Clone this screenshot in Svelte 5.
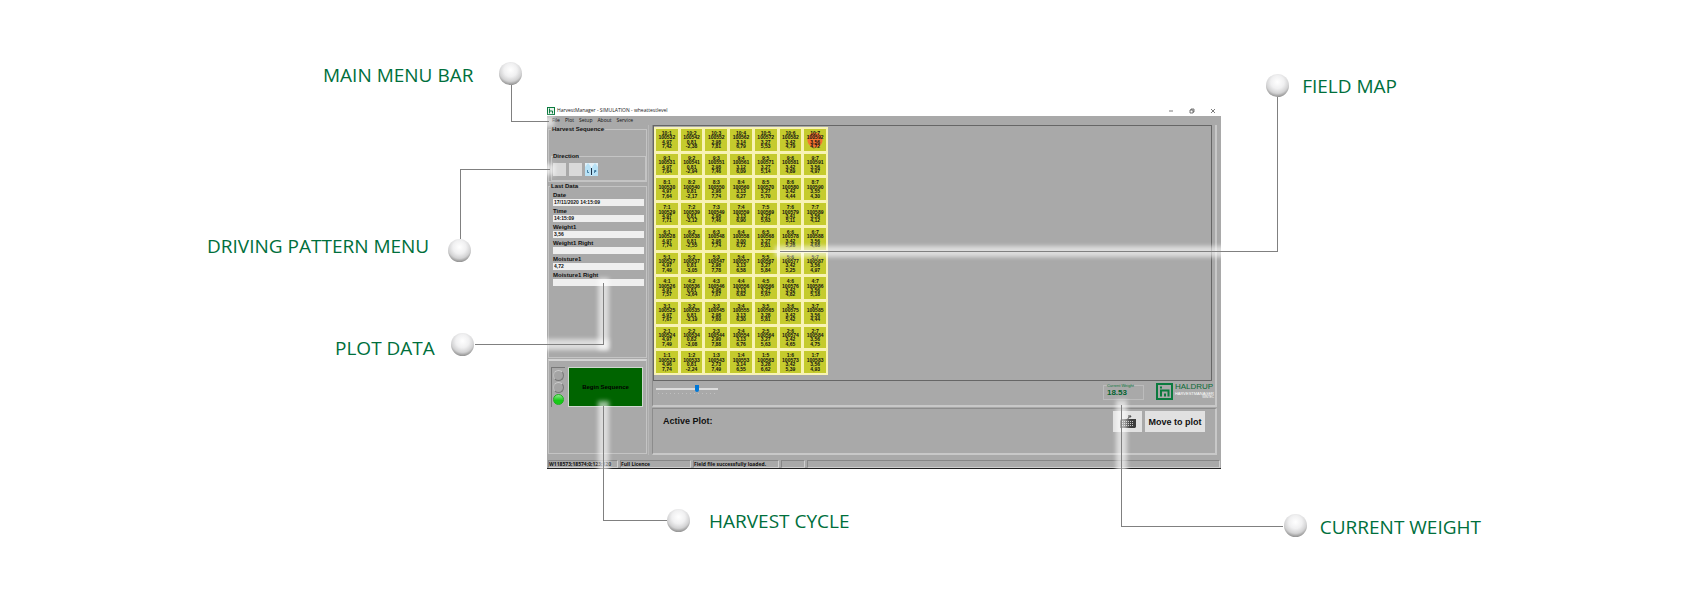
<script lang="ts">
  const menu = ['File', 'Plot', 'Setup', 'About', 'Service'];

  const lastData = [
    { id: 'date', label: 'Date', value: '17/11/2020 14:15:09' },
    { id: 'time', label: 'Time', value: '14:15:09' },
    { id: 'weight1', label: 'Weight1', value: '3,56' },
    { id: 'weight1-right', label: 'Weight1 Right', value: '' },
    { id: 'moisture1', label: 'Moisture1', value: '4,72' },
    { id: 'moisture1-right', label: 'Moisture1 Right', value: '' }
  ];

  // per field row: "weight moisture" for each column
  const readings: Record<number, string[]> = {
    10: ['4,97 7,42', '0,81 -2,38', '2,98 7,81', '3,14 6,79', '3,27 5,53', '3,42 4,79', '3,56 4,72'],
    9: ['4,97 7,64', '0,81 -2,94', '2,98 7,46', '3,12 6,09', '3,27 5,14', '3,42 4,89', '3,56 4,97'],
    8: ['4,97 7,64', '0,81 -2,17', '2,98 7,74', '3,13 6,27', '3,27 5,70', '3,42 4,44', '3,55 4,30'],
    7: ['4,97 7,71', '0,81 -3,12', '2,98 7,46', '3,13 6,90', '3,27 5,63', '3,41 5,11', '3,56 4,12'],
    6: ['4,97 7,74', '0,81 -2,55', '2,98 7,74', '3,00 6,72', '3,27 5,81', '3,42 5,28', '3,56 4,68'],
    5: ['4,97 7,49', '0,81 -3,05', '2,98 7,78', '3,13 6,58', '3,27 5,84', '3,42 5,25', '3,56 4,97'],
    4: ['4,97 7,57', '0,81 -3,64', '2,98 7,67', '3,13 6,62', '3,27 5,67', '3,42 4,82', '3,56 5,18'],
    3: ['4,97 7,67', '0,81 -3,19', '2,98 7,60', '3,13 6,30', '3,28 5,81', '3,42 5,42', '3,56 4,44'],
    2: ['4,97 7,49', '0,82 -3,08', '2,90 7,88', '3,13 6,76', '3,27 5,63', '3,42 4,65', '3,56 4,75'],
    1: ['4,96 7,74', '0,81 -2,24', '2,73 7,49', '3,14 6,55', '3,28 6,62', '3,42 5,39', '3,56 4,93']
  };

  const plots = Object.keys(readings)
    .map(Number)
    .sort((a, b) => b - a)
    .flatMap((row) =>
      readings[row].map((pair, i) => {
        const [weight, moisture] = pair.split(' ');
        return { pos: `${row}:${i + 1}`, id: 100512 + row + (i + 1) * 10, weight, moisture };
      })
    );

  const status = ['W118573;18574;0;123;120', 'Full Licence', 'Field file successfully loaded.', '', ''];

  const callouts = [
    { key: 'to-menu', text: 'MAIN MENU BAR' },
    { key: 'to-pattern', text: 'DRIVING PATTERN MENU' },
    { key: 'to-data', text: 'PLOT DATA' },
    { key: 'to-cycle', text: 'HARVEST CYCLE' },
    { key: 'to-map', text: 'FIELD MAP' },
    { key: 'to-weight', text: 'CURRENT WEIGHT' }
  ];

  let current = $state('10:7');
  let zoom = $state(67);
</script>

<main class="figure">
  <section class="window">
    <header class="titlebar">
      <svg class="app-icon" viewBox="0 0 16 16">
        <rect x="1" y="1" width="14" height="14" fill="#e8f3ec" stroke="#0b7a3e" stroke-width="2" />
        <path d="M5 3v10M5 8h6v5" fill="none" stroke="#0b7a3e" stroke-width="2" />
      </svg>
      <h1>HarvestManager - SIMULATION - wheattestlevel</h1>
      <div class="window-buttons">
        <button aria-label="Minimize"><svg viewBox="0 0 6 6"><path d="M1 3h4" /></svg></button>
        <button aria-label="Restore"><svg viewBox="0 0 6 6"><path d="M1 2h3v3h-3zM2 2v-1h3v3h-1" /></svg></button>
        <button aria-label="Close"><svg viewBox="0 0 6 6"><path d="M1 1l4 4M5 1l-4 4" /></svg></button>
      </div>
    </header>

    <nav class="menubar">
      {#each menu as item}
        <button>{item}</button>
      {/each}
    </nav>

    <div class="body">
      <aside class="side">
        <fieldset class="box sequence">
          <legend>Harvest Sequence</legend>
          <fieldset class="box direction">
            <legend>Direction</legend>
            <button aria-label="Direction 1"></button>
            <button aria-label="Direction 2"></button>
            <button class="active" aria-label="Left and right">
              <svg viewBox="0 0 13 13">
                <path d="M0 13V4l3-4 3 4v9z" fill="#b9e2f6" />
                <path d="M7 13V4l3-4 3 4v9z" fill="#b9e2f6" />
                <path d="M6 5h1v7h-1z" fill="#1c2f45" />
                <path d="M2.500 7v2.500h1.500M9.500 10v-2.500h1.500v1h-1" fill="none" stroke="#2f6d94" stroke-width="0.800" />
              </svg>
            </button>
          </fieldset>
        </fieldset>

        <fieldset class="box last-data">
          <legend>Last Data</legend>
          <div class="fields">
            {#each lastData as field}
              <div class="field">
                <label for={field.id}>{field.label}</label>
                <input id={field.id} type="text" value={field.value} readonly />
              </div>
            {/each}
          </div>
        </fieldset>

        <div class="cycle">
          <div class="lamps">
            <span></span>
            <span></span>
            <span class="on"></span>
          </div>
          <button class="begin">Begin Sequence</button>
        </div>
      </aside>

      <div class="content">
        <div class="map-panel">
          <div class="map">
            <div class="plots">
              {#each plots as plot}
                <button class="plot" class:current={plot.pos === current} onclick={() => (current = plot.pos)}>
                  <span>{plot.pos}</span>
                  <span>{plot.id}</span>
                  <span>{plot.weight}</span>
                  <span>{plot.moisture}</span>
                </button>
              {/each}
            </div>
          </div>

          <div class="map-footer">
            <div class="zoom">
              <input type="range" min="0" max="100" bind:value={zoom} aria-label="Zoom" />
              <div class="ticks"></div>
            </div>
            <fieldset class="weight">
              <legend>Current Weight</legend>
              <output>18.53</output>
            </fieldset>
            <div class="brand">
              <svg viewBox="0 0 17 17">
                <rect x="1" y="1" width="15" height="15" fill="none" stroke="#0b7a3e" stroke-width="2" />
                <path d="M5 3.500v2M5 6.500v7M5 7.500h7.500v6M9 13.500v-3" fill="none" stroke="#0b7a3e" stroke-width="2" />
              </svg>
              <div class="brand-text">
                <strong>HALDRUP</strong>
                <span>HARVESTMANAGER</span>
                <small>WINTEC</small>
              </div>
            </div>
          </div>
        </div>

        <div class="active-panel">
          <h2>Active Plot:</h2>
          <button class="keyboard" aria-label="Keyboard">
            <svg viewBox="0 0 18 15">
              <path d="M9 5c0-3 3-1 3-3h-3" fill="none" stroke="#333" />
              <path d="M2 5h15v8l-1 1H1V7z" fill="#3c3c3c" />
              <path d="M3 7.500h12M3 9.500h12M3 11.500h12" stroke="#c4c4c4" stroke-dasharray="1 1" />
            </svg>
          </button>
          <button class="move">Move to plot</button>
        </div>
      </div>
    </div>

    <footer class="statusbar">
      {#each status as text}
        <span>{text}</span>
      {/each}
    </footer>
  </section>

  {#each callouts as callout}
    <div class="lead {callout.key}"><i></i></div>
    <span class="ball {callout.key}"></span>
    <span class="caption {callout.key}">{callout.text}</span>
  {/each}
</main>

<style>
  :global(body) {
    margin: 0;
    background: #fff;
  }

  .figure {
    position: relative;
    box-sizing: border-box;
    min-height: 100vh;
    min-width: 1360px;
    padding: 105px 479px 138px 547px;
    font-family: "Liberation Sans", Arial, sans-serif;
    color: #111;
  }

  button,
  input {
    box-sizing: border-box;
    margin: 0;
    padding: 0;
    border: 0;
    font: inherit;
    color: inherit;
  }

  svg {
    display: block;
  }

  .window {
    display: flex;
    flex-direction: column;
    background: #a9a9a9;
    border-bottom: 1px solid #222;
  }

  /* title and menu */

  .titlebar {
    display: flex;
    align-items: center;
    gap: 2px;
    height: 11px;
    background: #fff;
  }

  .app-icon {
    width: 8px;
    height: 8px;
  }

  h1 {
    margin: 0;
    flex: 1;
    font: 5px/11px "Open Sans", sans-serif;
    color: #222;
  }

  .window-buttons {
    display: flex;
    gap: 15px;
    padding-right: 5px;
  }

  .window-buttons button {
    width: 6px;
    height: 6px;
    background: none;
  }

  .window-buttons path {
    fill: none;
    stroke: #444;
    stroke-width: 0.7;
  }

  .menubar {
    display: flex;
    gap: 5px;
    height: 9px;
    padding-left: 5px;
    font: 5px/9px "Open Sans", sans-serif;
  }

  .menubar button {
    background: none;
  }

  /* left column */

  .body {
    display: flex;
  }

  .side {
    display: flex;
    flex-direction: column;
    box-sizing: border-box;
    width: 102px;
    padding: 1px 1px 0;
    border-right: 1px solid #b8b8b8;
  }

  .box {
    box-sizing: border-box;
    min-width: 0;
    margin: 0;
    border: 1px solid #c4c4c4;
    font-size: 6px;
    font-weight: bold;
  }

  legend {
    padding: 0 1px;
    line-height: 7px;
  }

  .sequence {
    height: 56px;
    padding: 20px 0 0 2px;
  }

  .direction {
    display: flex;
    gap: 3px;
    height: 28px;
    padding: 3px 1px;
  }

  .direction > legend {
    padding: 0;
  }

  .direction button {
    width: 13px;
    height: 13px;
    background: #d9d9d9;
  }

  .direction .active {
    background: #e3f1f8;
  }

  .last-data {
    height: 175px;
    margin-top: 1px;
    padding: 0 2px 0 4px;
  }

  .last-data > legend {
    margin-left: -3px;
  }

  .fields {
    display: grid;
    grid-auto-rows: 1fr;
    height: 96px;
  }

  .field {
    display: flex;
    flex-direction: column;
    justify-content: flex-end;
  }

  .field label {
    line-height: 7px;
  }

  .field input {
    width: 100%;
    height: 7px;
    padding-left: 1px;
    background: #efefef;
    font-size: 5px;
    line-height: 7px;
  }

  .cycle {
    display: flex;
    align-items: flex-start;
    gap: 3px;
    height: 95px;
    margin-top: 1px;
    padding: 6px 3px 0 2px;
    box-sizing: border-box;
    border: 1px solid #c4c4c4;
    border-top: 2px solid #d4d4d4;
  }

  .lamps {
    display: flex;
    flex-direction: column;
    gap: 1px;
    padding: 2px 1px;
    border-top: 1px solid #777;
    border-left: 1px solid #777;
  }

  .lamps span {
    box-sizing: border-box;
    width: 11px;
    height: 11px;
    border: 1px solid #777;
    border-top-color: #ccc;
    border-left-color: #bbb;
    border-radius: 50%;
    background: #a4a4a4;
  }

  .lamps .on {
    border-color: #1cb01c;
    background: linear-gradient(#8be88b, #16c916 60%);
  }

  .begin {
    flex: 1;
    height: 40px;
    border: 1px solid #d0d8d0;
    background: #006400;
    color: #000;
    font-size: 6px;
    font-weight: bold;
  }

  /* map column */

  .content {
    display: flex;
    flex-direction: column;
    flex: 1;
    gap: 1px;
    margin: 0 4px 0 3px;
  }

  .map-panel {
    border: 1px solid #8c8c8c;
    border-top: 0;
    border-right: 2px solid #c8c8c8;
    border-bottom: 2px solid #c8c8c8;
  }

  .map {
    height: 256px;
    margin-right: 3px;
    padding-top: 1px;
    box-sizing: border-box;
    border: 1px solid #666;
  }

  .plots {
    display: grid;
    grid-template-columns: repeat(7, 1fr);
    grid-auto-rows: 1fr;
    gap: 3px;
    box-sizing: border-box;
    width: 174px;
    height: 248px;
    padding: 2px;
    background: #f8f3b4;
  }

  .plot {
    display: flex;
    flex-direction: column;
    padding: 2px 0;
    background: #c5cb2d;
    font-size: 5px;
    font-weight: bold;
    line-height: 4px;
  }

  .plot span {
    flex: 1;
  }

  .plot.current {
    background: radial-gradient(circle at 50% 50%, #f4742f 7px, #c5cb2d 8px);
  }

  .map-footer {
    display: flex;
    align-items: flex-start;
    height: 24px;
  }

  .zoom {
    width: 62px;
    margin: 4px auto 0 3px;
  }

  .zoom input {
    display: block;
    appearance: none;
    width: 100%;
    height: 7px;
    background: linear-gradient(#ddd, #ddd) center / 100% 2px no-repeat;
  }

  .zoom input::-webkit-slider-thumb {
    appearance: none;
    width: 4px;
    height: 7px;
    border-radius: 0 0 2px 2px;
    background: #0078d7;
  }

  .ticks {
    height: 1px;
    margin: 1px 2px;
    background: repeating-linear-gradient(90deg, #c0c0c0 0 1px, transparent 1px 4px);
  }

  .weight {
    box-sizing: border-box;
    width: 41px;
    height: 17px;
    margin: 2px 12px 0 0;
    padding: 0 3px;
    border: 1px solid #bcbcbc;
    color: #0b7a3e;
    font-size: 4px;
    white-space: nowrap;
  }

  .weight legend {
    padding: 0;
    line-height: 5px;
  }

  .weight output {
    display: block;
    color: #04632f;
    font-size: 8px;
    font-weight: bold;
    line-height: 9px;
  }

  .brand {
    display: flex;
    gap: 2px;
    margin: 2px 1px 0 0;
  }

  .brand svg {
    width: 17px;
    height: 17px;
  }

  .brand-text {
    display: flex;
    flex-direction: column;
    color: #fff;
    font-size: 4px;
    line-height: 5px;
  }

  .brand-text strong {
    color: #0b6a36;
    font-size: 8px;
    font-weight: normal;
    line-height: 8px;
  }

  .brand-text small {
    align-self: flex-end;
    font-size: 3px;
    line-height: 3px;
  }

  .active-panel {
    display: flex;
    align-items: flex-start;
    gap: 3px;
    box-sizing: border-box;
    height: 47px;
    padding: 2px 10px 0 10px;
    border: 1px solid #8c8c8c;
    border-right: 2px solid #c8c8c8;
    border-bottom: 2px solid #c8c8c8;
  }

  h2 {
    flex: 1;
    margin: 0;
    font-size: 9px;
    line-height: 20px;
  }

  .active-panel button {
    height: 21px;
    background: #e1e1e1;
    font-size: 9px;
    font-weight: bold;
  }

  .active-panel .keyboard {
    width: 29px;
  }

  .keyboard svg {
    width: 18px;
    height: 15px;
    margin: 0 auto;
  }

  .active-panel .move {
    width: 60px;
  }

  .statusbar {
    display: grid;
    grid-template-columns: 70px 71px 86px 24px 1fr;
    gap: 2px;
    margin-top: 5px;
    padding: 0 1px;
    font: bold 5px/6px "Open Sans", sans-serif;
  }

  .statusbar span {
    height: 6px;
    overflow: hidden;
    white-space: nowrap;
    border: 1px solid #d0d0d0;
    border-top-color: #888;
    border-left-color: #888;
  }

  /* callouts pinned round the window */

  .lead,
  .ball,
  .caption {
    position: absolute;
  }

  .lead i {
    position: absolute;
    inset: 0;
    z-index: 1;
    border: 0 solid #808080;
  }

  .lead::before,
  .lead::after {
    content: "";
    position: absolute;
    box-shadow: 0 0 4px 5px rgba(255, 255, 255, 0.6);
  }

  .lead::before {
    left: 0;
    right: 0;
    height: 1px;
  }

  .lead::after {
    top: 0;
    bottom: 0;
    width: 1px;
  }

  .lead.to-menu { left: 511px; top: 85px; width: 38px; height: 37px; }
  .lead.to-pattern { left: 460px; top: 169px; width: 90px; height: 70px; }
  .lead.to-data { left: 475px; top: 283px; width: 129px; height: 62px; }
  .lead.to-cycle { left: 603px; top: 406px; width: 64px; height: 115px; }
  .lead.to-map { left: 780px; right: 422px; top: 97px; height: 155px; }
  .lead.to-weight { right: 417px; top: 405px; width: 162px; height: 122px; }

  .lead.to-menu i,
  .lead.to-cycle i,
  .lead.to-weight i { border-width: 0 0 1px 1px; }
  .lead.to-pattern i { border-width: 1px 0 0 1px; }
  .lead.to-data i,
  .lead.to-map i { border-width: 0 1px 1px 0; }

  .lead:not(.to-pattern)::before { bottom: 0; }
  .lead.to-data::after,
  .lead.to-map::after { right: 0; }

  .ball {
    z-index: 2;
    width: 23px;
    height: 23px;
    border-radius: 50%;
    background: radial-gradient(circle at 50% 35%, #fff 0, #f0f0f1 35%, #d2d2d3 60%, #a8a8a8 72%, #555 100%);
  }

  .ball.to-menu { left: 499px; top: 62px; }
  .ball.to-pattern { left: 448px; top: 239px; }
  .ball.to-data { left: 451px; top: 333px; }
  .ball.to-cycle { left: 667px; top: 509px; }
  .ball.to-map { right: 411px; top: 74px; }
  .ball.to-weight { right: 393px; top: 514px; }

  .caption {
    font: 19px/26px "Open Sans", "Noto Sans", sans-serif;
    color: #006f3c;
    white-space: nowrap;
  }

  .caption.to-menu { left: 323px; top: 62px; }
  .caption.to-pattern { left: 207px; top: 233px; }
  .caption.to-data { left: 335px; top: 335px; }
  .caption.to-cycle { left: 709px; top: 508px; }
  .caption.to-map { right: 303px; top: 73px; }
  .caption.to-weight { right: 219px; top: 514px; }
</style>
